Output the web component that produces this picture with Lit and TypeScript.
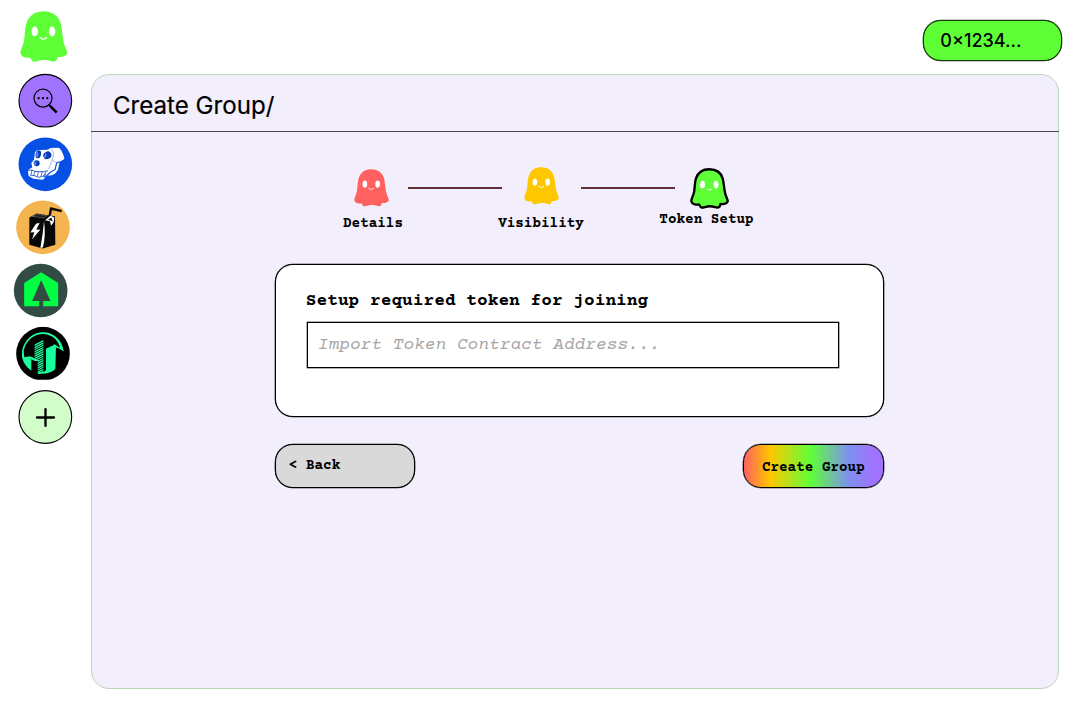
import { LitElement, html, css, svg } from "lit";
import { customElement, property } from "lit/decorators.js";

@customElement("ghost-mark")
class GhostMark extends LitElement {
  @property() color = "#5fff38";
  @property({ type: Boolean }) outlined = false;

  static styles = css`
    :host { display: block; }
    svg { display: block; width: 100%; height: 100%; overflow: visible; }
  `;

  render() {
    return html`<svg viewBox="0 0 142 152" preserveAspectRatio="none">
      <path
        d="M70 1C94 1 115 12 122 38C127 58 127 88 135 108C139 117 142 122 141 127C138 134 127 139 113 137C112 144 107 151 101 151C92 150 88 146 72 146C56 146 50 152 40 151C35 149 36 144 30 139C18 141 4 137 1 126C1 118 9 104 12 89C15 70 14 52 19 37C28 11 48 1 70 1Z"
        fill=${this.color}
        stroke=${this.outlined ? "#000" : "none"}
        stroke-width="9"
        stroke-linejoin="round"
      />
      <ellipse cx="44" cy="61" rx="9.5" ry="15" fill="#fff" />
      <ellipse cx="96" cy="61" rx="9.5" ry="15" fill="#fff" />
      <path d="M60 79Q70 88 80 79" fill="none" stroke="#fff" stroke-width="3.5" stroke-linecap="round" />
    </svg>`;
  }
}

@customElement("group-rail")
class GroupRail extends LitElement {
  static styles = css`
    :host { display: flex; flex-direction: column; gap: 9.25px; }
    svg { display: block; width: 54px; height: 54px; margin-left: 18.3px; overflow: visible; }
    svg:first-child { margin-top: -0.4px; }
    .juice { margin-left: 16px; }
    .tree { margin-left: 13.5px; }
    .city { margin-left: 16px; }
  `;

  render() {
    const hatch = Array.from({ length: 15 }, (_, i) => svg`<path d=${`M101 ${272 + i * 6.6}L133 ${256 + i * 6.6}`} />`);
    return html`
      <svg viewBox="53 221.5 162 162">
        <circle cx="135" cy="301.5" r="79" fill="#a073ff" stroke="#000" stroke-width="3.4" />
        <g fill="none" stroke="#000">
          <circle cx="128" cy="294" r="27" stroke-width="3.6" />
          <path d="M145 313L151 319" stroke-width="4" />
          <path d="M149 317L169 337" stroke-width="7.5" />
        </g>
        <g fill="#000">
          <circle cx="115" cy="294" r="3.4" /><circle cx="128" cy="294" r="3.4" /><circle cx="141" cy="294" r="3.4" />
        </g>
      </svg>

      <svg viewBox="53 20 162 162">
        <circle cx="135" cy="102" r="80.5" fill="#0750e5" />
        <path d="M104 66Q108 57 121 59L142 58L151 53L176 52L184 62L191 79L192 86L178 94L173 118L164 130L154 135L139 136L128 148L99 145L85 137L83 125L86 117L96 111L93 98L101 88Z" fill="#fff" />
        <g fill="#0b3bb2">
          <ellipse cx="114" cy="72" rx="8" ry="12" transform="rotate(15 114 72)" />
          <ellipse cx="141" cy="75" rx="12.5" ry="11" transform="rotate(-30 141 75)" />
          <ellipse cx="109" cy="99" rx="9" ry="9" />
        </g>
        <path d="M109 63Q116 66 113 79L107 80Q110 70 109 63ZM134 68Q142 70 136 82L130 80Q136 74 134 68ZM104 93Q111 97 105 106L101 101Z" fill="#5d92fa" />
        <path d="M178 94L169 98L164 118L150 126L139 136L129 140" fill="none" stroke="#0d51dc" stroke-width="3.5" />
        <g fill="none" stroke="#3870df" stroke-width="1.4">
          <path d="M153 55L160 70L156 89L168 97M156 89L144 116" />
        </g>
        <g fill="none" stroke="#174cc0" stroke-width="2.6">
          <path d="M86 120L95 119L103 123L117 124L132 124L143 121" />
          <path d="M89 134L103 136L114 141L126 138L137 132" />
          <path d="M95 119L92 133M104 123L100 136M114 124L111 139M126 124L122 138M137 123L132 134" stroke-width="2.2" />
        </g>
      </svg>

      <svg class="juice" viewBox="48 209.5 162 162">
        <circle cx="129" cy="291.5" r="80.5" fill="#f4b44f" />
        <path d="M148 262L153 235L185 243" fill="none" stroke="#080808" stroke-width="7" stroke-linejoin="round" />
        <path d="M88 262L110 250L165 258L166 344L128 355L88 344Z" fill="#080808" />
        <path d="M97 259L112 253L141 256L132 263Z" fill="#171717" stroke="#e4d8c6" stroke-width="1" />
        <path d="M135 270L152 256L163 263L161 276L153 287L150 273Z" fill="#fff" />
        <path d="M144 269L154 262L158 273L151 271Z" fill="#111" />
        <path d="M132 273Q138 315 129 351L121 354Q129 310 132 273Z" fill="#fff" />
        <path d="M108 281L91 307L103 306L96 328L121 298L109 299L119 278Z" fill="#fff" />
      </svg>

      <svg class="tree" viewBox="41.5 24 162 162">
        <circle cx="121.5" cy="106.5" r="80.5" fill="#324b44" />
        <path d="M72 154V84L123 52L174 84V154H129V138H151L123 75L96 138H117V154Z" fill="#00ff43" />
      </svg>

      <svg class="city" viewBox="48 216 162 162">
        <clipPath id="disc"><path d="M48 215H210V374H48Z" /></clipPath>
        <clipPath id="tower"><path d="M103 267L131 252V353L113 356V318L103 310Z" /></clipPath>
        <circle cx="129" cy="296" r="80.5" fill="#000" clip-path="url(#disc)" />
        <path d="M95 348Q61 324 66 288C74 250 104 229 134 232C162 234 188 258 190 287L181 282C177 257 156 239 133 237C103 235 76 257 71 289L73 307L91 304L94 313V348Z" fill="#1aff9d" />
        <path d="M91 304L119 318H104L94 313Z" fill="#1aff9d" />
        <path d="M138 281L163 269L168 272L166 342Q150 359 114 356V351L132 350L138 346Z" fill="#1aff9d" />
        <path d="M163 269L190 287L183 280L168 276Z" fill="#1aff9d" stroke="#1aff9d" stroke-width="3" />
        <g fill="none" stroke="#1aff9d" stroke-width="3.8" clip-path="url(#tower)">${hatch}</g>
      </svg>

      <svg viewBox="53 404.5 162 162">
        <circle cx="135" cy="485.5" r="79" fill="#d2fdca" stroke="#000" stroke-width="3.4" />
        <path d="M110 487H161M135.5 462V512" stroke="#000" stroke-width="7" stroke-linecap="round" />
      </svg>
    `;
  }
}

@customElement("app-root")
class AppRoot extends LitElement {
  static styles = css`
    :host {
      display: flex; flex-direction: column; box-sizing: border-box;
      width: 1080px; height: 707px; overflow: hidden; background: #fff; color: #000;
      font-family: Inter, sans-serif;
    }
    * { box-sizing: border-box; }
    .top { display: flex; justify-content: space-between; height: 74px; flex: none; padding: 10.6px 17.7px 0 20px; }
    .logo { width: 47.5px; height: 51px; }
    .wallet {
      width: 139.5px; height: 41.4px; margin-top: 9px; padding-left: 16.5px;
      border: 1px solid #16360e; border-radius: 18px; background: #5fff38; box-shadow: 0 0 0 0.3px #16360e;
      font-size: 18px; font-weight: 500; line-height: 40px; white-space: nowrap;
    }
    .body { display: flex; }
    .rail { width: 90.5px; flex: none; }
    .panel {
      width: 968.5px; height: 615px; border: 1.2px solid #b9d7b9; border-radius: 18px;
      background: #f2eefb; display: flex; flex-direction: column;
    }
    .title {
      margin: 0 -1px; height: 57px; flex: none; padding-left: 22.5px;
      border-bottom: 1px solid #4a464f; font-size: 24.1px; font-weight: 400; line-height: 62px;
      -webkit-text-stroke: 0.2px #000;
    }
    .mono { font-family: "Courier Prime", "Liberation Mono", monospace; font-weight: 700; }
    .steps { display: flex; height: 132px; padding-left: 251.5px; }
    .step { display: flex; flex-direction: column; align-items: center; font-size: 14.3px; line-height: 16px; white-space: nowrap; }
    .step ghost-mark { width: 35px; height: 37.6px; }
    .details { width: 60px; padding-top: 36.5px; }
    .details ghost-mark { margin: 0 3px 10.2px 0; }
    .visibility { width: 86px; padding-top: 35px; margin-left: -4px; }
    .visibility ghost-mark { margin: 0 0 11.7px 0.6px; }
    .token { width: 95px; padding-top: 37px; margin-left: -15.8px; }
    .token ghost-mark { width: 37px; height: 38.8px; margin: 0 0 4.7px 6.6px; }
    .rule { width: 94px; height: 2px; margin: 55px 0 0 5px; background: #612f38; }
    .rule.second { margin-left: -3.2px; }
    .form { width: 609px; margin-left: 183.3px; }
    .card {
      height: 153px; padding: 25px 0 0 30px; border: 1px solid #000;
      border-radius: 18px; background: #fff; box-shadow: 0 0 0 0.3px #000;
    }
    .label { font-size: 17.85px; line-height: 22px; white-space: nowrap; }
    .field {
      display: block; width: 532px; height: 46px; margin: 10px 0 0 1px; padding: 0 0 1px 10px;
      border: 1px solid #000; border-radius: 0; background: #fff; outline: none; box-shadow: 0 0 0 0.3px #000;
      font: italic 400 17.85px "Courier Prime", "Liberation Mono", monospace;
    }
    .field::placeholder { color: #a5a5a5; opacity: 1; }
    .actions { display: flex; justify-content: space-between; margin-top: 27px; }
    .btn {
      width: 140.5px; height: 44px; border: 1px solid #000; border-radius: 18px; padding: 0 0 0 13px;
      box-shadow: 0 0 0 0.3px #000;
      font-size: 14.3px; line-height: 43px; text-align: left; color: #000; white-space: nowrap;
    }
    .back { background: #d9d9d9; }
    .create {
      padding: 2px 0 0 17.6px; line-height: 42px;
      background: linear-gradient(90deg, #ff6060 0%, #ffc700 19%, #5fff38 48%, #7c91ee 75%, #a073ff 93%);
    }
  `;

  render() {
    return html`
      <header class="top">
        <ghost-mark class="logo"></ghost-mark>
        <div class="wallet">0×1234...</div>
      </header>
      <div class="body">
        <group-rail class="rail"></group-rail>
        <main class="panel">
          <div class="title">Create Group/</div>
          <div class="steps mono">
            <div class="step details"><ghost-mark color="#ff6060"></ghost-mark>Details</div>
            <div class="rule"></div>
            <div class="step visibility"><ghost-mark color="#ffc700"></ghost-mark>Visibility</div>
            <div class="rule second"></div>
            <div class="step token"><ghost-mark outlined></ghost-mark>Token Setup</div>
          </div>
          <div class="form">
            <section class="card">
              <div class="label mono">Setup required token for joining</div>
              <input class="field" placeholder="Import Token Contract Address..." />
            </section>
            <div class="actions">
              <button class="btn back mono">&lt; Back</button>
              <button class="btn create mono">Create Group</button>
            </div>
          </div>
        </main>
      </div>
    `;
  }
}
